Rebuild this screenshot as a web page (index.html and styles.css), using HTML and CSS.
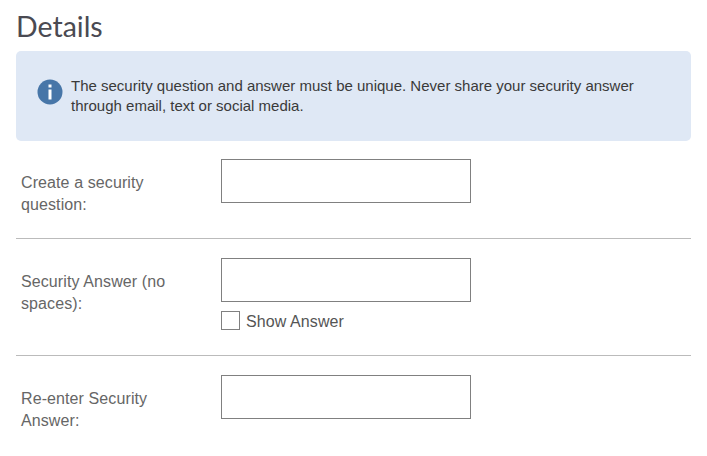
FILE: index.html
```html
<!DOCTYPE html>
<html lang="en">
<head>
  <meta charset="UTF-8" />
  <meta name="viewport" content="width=device-width, initial-scale=1" />
  <title>Details</title>
  <link rel="stylesheet" href="styles.css">
</head>
<body>

<h2 class="title">Details</h2>

<div class="info-box">
  <svg class="info-icon" width="26" height="26" viewBox="0 0 26 26">
    <circle cx="13" cy="13" r="12.5" fill="#4776a8" />
    <rect x="11.5" y="5.5" width="3" height="3" fill="#fff" />
    <rect x="11.5" y="10.5" width="3" height="10" fill="#fff" />
  </svg>
  <p class="info-text">The security question and answer must be unique. Never share your security answer through email, text or social media.</p>
</div>

<div class="form-row">
  <label class="form-label" for="question">Create a security question:</label>
  <div class="form-field">
    <input type="text" id="question" class="text-input" />
  </div>
</div>

<div class="form-row">
  <label class="form-label" for="answer">Security Answer (no spaces):</label>
  <div class="form-field">
    <input type="text" id="answer" class="text-input" />
    <label class="show-answer">
      <input type="checkbox" class="check-input" />
      <span class="show-answer-text">Show Answer</span>
    </label>
  </div>
</div>

<div class="form-row">
  <label class="form-label" for="answer2">Re-enter Security Answer:</label>
  <div class="form-field">
    <input type="text" id="answer2" class="text-input" />
  </div>
</div>

</body>
</html>
```

FILE: styles.css
```css
body {
  font-family: "Liberation Sans", Arial, sans-serif;
  background: #fff;
  color: #333;
  margin: 0;
  padding: 0 16px;
}
.title {
  font-family: Lato, sans-serif;
  font-weight: 400;
  font-size: 28.5px;
  line-height: 34px;
  color: #4a4a52;
  margin: 0;
  padding-top: 9px;
  padding-bottom: 8px;
}
.info-box {
  display: flex;
  align-items: flex-start;
  background: #dfe8f5;
  border-radius: 5px;
  height: 90px;
  box-sizing: border-box;
  padding: 25px 21px 0;
  margin-bottom: 18px;
}
.info-icon {
  flex: none;
  margin-top: 3px;
  margin-right: 8px;
}
.info-text {
  margin: 0;
  font-size: 15px;
  line-height: 20px;
  color: #3a3a3a;
  width: 590px;
}
.form-row {
  display: flex;
  align-items: flex-start;
  padding-bottom: 22px;
  margin-bottom: 19px;
  border-bottom: 1px solid #bbb;
}
.form-row:last-child {
  border-bottom: none;
  margin-bottom: 0;
  padding-bottom: 0;
}
.form-label {
  width: 155px;
  margin-left: 5px;
  margin-right: 45px;
  margin-top: 13px;
  font-size: 16px;
  line-height: 22px;
  letter-spacing: 0.1px;
  color: #666;
}
.form-field {
  display: flex;
  flex-direction: column;
}
.text-input {
  width: 250px;
  height: 44px;
  box-sizing: border-box;
  border: 1px solid #808080;
  margin: 0;
  padding: 0 8px;
  background: #fff;
}
.show-answer {
  display: flex;
  align-items: flex-start;
  height: 19px;
  margin-top: 9px;
  margin-bottom: 3px;
  font-size: 16px;
  letter-spacing: 0.1px;
  color: #555;
}
.show-answer-text {
  padding-top: 2px;
}
.check-input {
  appearance: none;
  width: 19px;
  height: 19px;
  box-sizing: border-box;
  border: 1px solid #808080;
  background: #fff;
  margin: 0 6px 0 0;
}
```
